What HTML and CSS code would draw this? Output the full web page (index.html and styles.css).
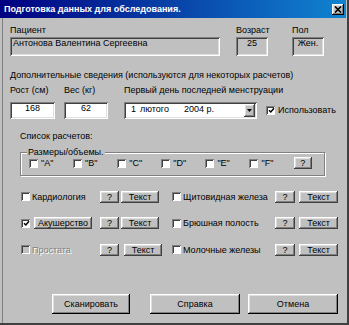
FILE: index.html
```html
<!DOCTYPE html>
<html lang="ru">
<head>
  <meta charset="UTF-8" />
  <title>Подготовка данных для обследования</title>
  <link rel="stylesheet" href="styles.css">
</head>
<body>
  <div class="window">
    <div class="titlebar">
      <span class="title">Подготовка данных для обследования.</span>
      <span class="close">
        <svg width="8" height="7" viewBox="0 0 8 7"><path d="M1 0.5 L7 6.5 M7 0.5 L1 6.5" stroke="#000" stroke-width="1.6"/></svg>
      </span>
    </div>

    <div class="client">
      <div class="patient-row">
        <div class="f-name">
          <div class="lbl">Пациент</div>
          <div class="ro-box">Антонова Валентина Сергеевна</div>
        </div>
        <div class="f-age">
          <div class="lbl">Возраст</div>
          <div class="ro-box center">25</div>
        </div>
        <div class="f-sex">
          <div class="lbl">Пол</div>
          <div class="ro-box center">Жен.</div>
        </div>
      </div>

      <div class="note">Дополнительные сведения (используются для некоторых расчетов)</div>

      <div class="measure-row">
        <div class="m-height">
          <div class="lbl">Рост (см)</div>
          <div class="edit">168</div>
        </div>
        <div class="m-weight">
          <div class="lbl">Вес (кг)</div>
          <div class="edit">62</div>
        </div>
        <div class="m-date">
          <div class="lbl">Первый день последней менструации</div>
          <div class="combo">
            <span class="d-day">1</span><span class="d-month">лютого</span><span class="d-year">2004 р.</span>
            <span class="drop"><svg width="5" height="3" viewBox="0 0 5 3"><path d="M0 0 H5 L2.5 3 Z" fill="#000"/></svg></span>
          </div>
        </div>
        <label class="use-check">
          <span class="cb checked"><svg width="7" height="7" viewBox="0 0 7 7"><path d="M1 3.2 L2.8 5 L6 1.2" stroke="#000" stroke-width="1.5" fill="none"/></svg></span>
          Использовать
        </label>
      </div>

      <div class="list-title">Список расчетов:</div>

      <div class="group">
        <span class="group-title">Размеры/объемы.</span>
        <label class="size-item"><span class="cb"></span>"A"</label>
        <label class="size-item"><span class="cb"></span>"B"</label>
        <label class="size-item"><span class="cb"></span>"C"</label>
        <label class="size-item"><span class="cb"></span>"D"</label>
        <label class="size-item"><span class="cb"></span>"E"</label>
        <label class="size-item"><span class="cb"></span>"F"</label>
        <button class="btn btn-q">?</button>
      </div>

      <div class="calc-row">
        <div class="calc calc-left">
          <label class="calc-name"><span class="cb"></span>Кардиология</label>
          <button class="btn btn-q">?</button>
          <button class="btn btn-text">Текст</button>
        </div>
        <div class="calc calc-right">
          <label class="calc-name"><span class="cb"></span>Щитовидная железа</label>
          <button class="btn btn-q">?</button>
          <button class="btn btn-text">Текст</button>
        </div>
      </div>

      <div class="calc-row">
        <div class="calc calc-left">
          <label class="calc-name">
            <span class="cb checked"><svg width="7" height="7" viewBox="0 0 7 7"><path d="M1 3.2 L2.8 5 L6 1.2" stroke="#000" stroke-width="1.5" fill="none"/></svg></span>
            <span class="btn btn-name">Акушерство</span>
          </label>
          <button class="btn btn-q">?</button>
          <button class="btn btn-text">Текст</button>
        </div>
        <div class="calc calc-right">
          <label class="calc-name"><span class="cb"></span>Брюшная полость</label>
          <button class="btn btn-q">?</button>
          <button class="btn btn-text">Текст</button>
        </div>
      </div>

      <div class="calc-row">
        <div class="calc calc-left">
          <label class="calc-name disabled"><span class="cb"></span>Простата</label>
          <button class="btn btn-q">?</button>
          <button class="btn btn-text wide">Текст</button>
        </div>
        <div class="calc calc-right">
          <label class="calc-name"><span class="cb"></span>Молочные железы</label>
          <button class="btn btn-q">?</button>
          <button class="btn btn-text">Текст</button>
        </div>
      </div>

      <div class="footer">
        <button class="btn btn-big btn-scan">Сканировать</button>
        <button class="btn btn-big btn-help">Справка</button>
        <button class="btn btn-big btn-cancel">Отмена</button>
      </div>
    </div>
  </div>
</body>
</html>
```

FILE: styles.css
```css
* {
  box-sizing: border-box;
}
body {
  margin: 0;
  padding: 0;
  font-family: "Liberation Sans", Arial, sans-serif;
  font-size: 9px;
  color: #000;
  background: #c0c0c0;
}
.window {
  width: 349px;
  height: 325px;
  background: #c0c0c0;
  border-right: 2px solid #404040;
  border-bottom: 2px solid #404040;
  overflow: hidden;
}
.titlebar {
  height: 18px;
  margin-right: 1px;
  padding-left: 4px;
  display: flex;
  align-items: center;
  background: linear-gradient(to right, #000080, #1084d0);
}
.title {
  color: #fff;
  font-weight: bold;
  font-size: 9px;
}
.close {
  margin-left: auto;
  margin-right: 2px;
  width: 12px;
  height: 11px;
  background: #c0c0c0;
  display: flex;
  align-items: center;
  justify-content: center;
  box-shadow: inset -1px -1px #000, inset 1px 1px #fff, inset -2px -2px #808080, inset 2px 2px #dfdfdf;
}
.client {
  margin-left: 2px;
  height: 305px;
  border-left: 1px solid #808080;
  padding: 7px 0 0 7px;
}
.lbl {
  line-height: 11px;
  white-space: nowrap;
}

/* patient */
.patient-row {
  display: flex;
}
.patient-row .lbl {
  margin-bottom: 1px;
}
.f-name {
  width: 210px;
}
.f-age {
  width: 32px;
  margin-left: 16px;
}
.f-sex {
  width: 32px;
  margin-left: 24px;
}
.ro-box {
  height: 19px;
  padding: 2px 3px 0;
  line-height: 9px;
  white-space: nowrap;
  box-shadow: inset 1px 1px #808080, inset -1px -1px #fff, inset 2px 2px #404040, inset -2px -2px #dfdfdf;
}
.ro-box.center {
  text-align: center;
}

.note {
  margin-top: 14px;
  line-height: 11px;
}

/* measures */
.measure-row {
  display: flex;
  align-items: flex-end;
  margin-top: 4px;
}
.measure-row .lbl {
  margin-bottom: 6px;
}
.m-height {
  width: 45px;
}
.m-weight {
  width: 44px;
  margin-left: 9px;
}
.m-date {
  width: 133px;
  margin-left: 16px;
}
.edit {
  height: 17px;
  padding-top: 2px;
  line-height: 9px;
  text-align: center;
  background: #fff;
  box-shadow: inset 1px 1px #808080, inset -1px -1px #fff, inset 2px 2px #404040, inset -2px -2px #dfdfdf;
}
.combo {
  height: 17px;
  display: flex;
  align-items: flex-start;
  padding: 2px 2px 0 7px;
  line-height: 10px;
  background: #fff;
  box-shadow: inset 1px 1px #808080, inset -1px -1px #fff, inset 2px 2px #404040, inset -2px -2px #dfdfdf;
}
.d-month {
  margin-left: 4px;
}
.d-year {
  margin-left: 15px;
}
.drop {
  margin-left: auto;
  width: 11px;
  height: 13px;
  display: flex;
  align-items: center;
  justify-content: center;
  background: #c0c0c0;
  box-shadow: inset -1px -1px #404040, inset 1px 1px #fff, inset -2px -2px #808080, inset 2px 2px #dfdfdf;
}
.use-check {
  display: flex;
  align-items: center;
  gap: 3px;
  height: 17px;
  margin-left: 9px;
  padding-bottom: 1px;
}

/* checkbox */
.cb {
  width: 9px;
  height: 9px;
  flex: none;
  display: flex;
  align-items: center;
  justify-content: center;
  background: #fff;
  box-shadow: inset 1px 1px #808080, inset -1px -1px #fff, inset 2px 2px #404040;
}
.cb svg {
  margin: 1px 0 0 1px;
}

.list-title {
  margin-top: 12px;
  margin-left: 10px;
  line-height: 11px;
}

/* sizes group */
.group {
  position: relative;
  width: 305px;
  height: 24px;
  margin: 10px 0 0 10px;
  padding: 4px 12px 0 8px;
  display: flex;
  align-items: center;
  border: 1px solid #808080;
  box-shadow: inset 1px 1px #fff, 1px 1px #fff;
}
.group .btn-q {
  margin-left: auto;
  margin-bottom: 6px;
}
.group .size-item {
  margin-bottom: 6px;
}
.group-title {
  position: absolute;
  top: -6px;
  left: 6px;
  padding: 0 1px;
  line-height: 11px;
  background: #c0c0c0;
}
.size-item {
  width: 45.4px;
  display: flex;
  align-items: center;
  gap: 3px;
}

/* buttons */
.btn {
  font-family: inherit;
  font-size: 9px;
  color: #000;
  background: #c0c0c0;
  border: none;
  margin: 0;
  padding: 0;
  display: flex;
  align-items: center;
  justify-content: center;
  box-shadow: inset -1px -1px #404040, inset 1px 1px #fff, inset -2px -2px #808080, inset 2px 2px #dfdfdf;
}
.btn-q {
  width: 19px;
  height: 12px;
}
.btn-text {
  width: 38px;
  height: 12px;
  margin-left: 2px;
}
.btn-text.wide {
  margin-left: 5px;
}
.btn-name {
  width: 58px;
  height: 12px;
  margin-left: 2px;
}

/* calculations */
.calc-row {
  display: flex;
  align-items: center;
  height: 12px;
  padding-left: 11px;
  margin-top: 14.5px;
}
.calc-row:first-of-type {
  margin-top: 14px;
}
.calc {
  display: flex;
  align-items: center;
}
.calc-name {
  display: flex;
  align-items: center;
  gap: 2px;
  white-space: nowrap;
}
.calc-left {
  width: 151px;
}
.calc-left .calc-name {
  width: 79px;
}
.calc-right .calc-name {
  width: 103px;
}
.calc-right .btn-q {
  width: 20px;
}
.calc-right .btn-text {
  width: 39px;
  margin-left: 4px;
}
.calc-name.disabled {
  color: #808080;
  text-shadow: 1px 1px #fff;
}
.calc-name.disabled .cb {
  background: #c0c0c0;
}

/* footer */
.footer {
  display: flex;
  margin: 38px 0 0 42px;
}
.btn-big {
  height: 20px;
  box-shadow: inset -1px -1px #000, inset 1px 1px #fff, inset -2px -2px #808080, inset 2px 2px #dfdfdf;
}
.btn-scan {
  width: 78px;
}
.btn-help {
  width: 90px;
  margin-left: 20px;
}
.btn-cancel {
  width: 90px;
  margin-left: 8px;
}
```
